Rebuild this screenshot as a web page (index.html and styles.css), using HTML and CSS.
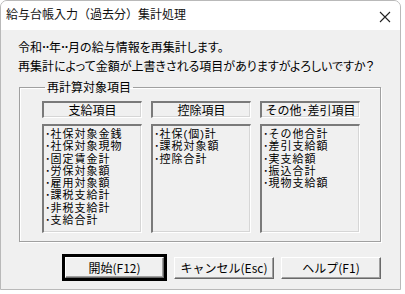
FILE: index.html
```html
<!DOCTYPE html>
<html lang="ja">
<head>
    <meta charset="UTF-8">
    <title>給与台帳入力（過去分）集計処理</title>
    <link rel="stylesheet" href="styles.css">
</head>
<body>

<div class="window">
    <div class="titlebar">
        <span class="title">給与台帳入力（過去分）集計処理</span>
        <svg class="close" width="12" height="12" viewBox="0 0 12 12">
            <path d="M1 1 L11 11 M11 1 L1 11" stroke="#222" stroke-width="1.1" fill="none"/>
        </svg>
    </div>

    <div class="content">
        <div class="message">
            <div>令和<span class="dots">･･</span>年<span class="dots">･･</span>月の給与情報を再集計します。</div>
            <div>再集計によって金額が上書きされる項目がありますがよろしいですか？</div>
        </div>

        <fieldset class="group">
            <legend>再計算対象項目</legend>
            <div class="columns">
                <div class="column">
                    <div class="col-head">支給項目</div>
                    <ul class="col-list">
                        <li>社保対象金銭</li>
                        <li>社保対象現物</li>
                        <li>固定賃金計</li>
                        <li>労保対象額</li>
                        <li>雇用対象額</li>
                        <li>課税支給計</li>
                        <li>非税支給計</li>
                        <li>支給合計</li>
                    </ul>
                </div>
                <div class="column">
                    <div class="col-head">控除項目</div>
                    <ul class="col-list">
                        <li>社保(個)計</li>
                        <li>課税対象額</li>
                        <li>控除合計</li>
                    </ul>
                </div>
                <div class="column">
                    <div class="col-head">その他･差引項目</div>
                    <ul class="col-list">
                        <li>その他合計</li>
                        <li>差引支給額</li>
                        <li>実支給額</li>
                        <li>振込合計</li>
                        <li>現物支給額</li>
                    </ul>
                </div>
            </div>
        </fieldset>

        <div class="buttons">
            <div class="default-frame"><button class="btn">開始(F12)</button></div>
            <button class="btn">キャンセル(Esc)</button>
            <button class="btn">ヘルプ(F1)</button>
        </div>
    </div>
</div>

</body>
</html>
```

FILE: styles.css
```css
/* Page and dialog window */
body {
    margin: 0;
    background-color: #ffffff;
    font-family: "Noto Sans CJK JP", "Noto Sans", sans-serif;
    font-size: 12px;
    color: #000;
}

.window {
    width: 401px;
    height: 290px;
    box-sizing: border-box;
    border: 1px solid #b9b9b9;
    border-radius: 7px 7px 0 0;
    background-color: #f0f0f0;
    overflow: hidden;
}

.titlebar {
    height: 29px;
    background-color: #ffffff;
    display: flex;
    align-items: center;
    justify-content: space-between;
    padding: 0 9px 0 5px;
}

.title {
    font-size: 12px;
    line-height: 14px;
    margin-top: -3px;
    color: #111;
}

.close {
    margin-top: 2px;
}

.content {
    padding: 7px 0 0 16px;
}

/* Message lines */
.message {
    line-height: 19px;
    font-feature-settings: "palt";
    padding-left: 1px;
}

.dots {
    letter-spacing: -2.5px;
    margin-left: -1px;
    margin-right: 1px;
}

/* Group box */
.group {
    width: 362px;
    height: 162px;
    box-sizing: border-box;
    margin: 5px 0 0 2px;
    padding: 7px 19px 8px 22px;
    border: 1px solid #a0a0a0;
    box-shadow: inset 1px 1px 0 #ffffff, 1px 1px 0 #ffffff;
}

.group legend {
    padding: 0 2px;
    margin-left: 3px;
    line-height: 14px;
}

.columns {
    display: flex;
    gap: 9px;
}

.column {
    width: 100px;
    display: flex;
    flex-direction: column;
    gap: 6px;
}

.col-head,
.col-list {
    box-sizing: border-box;
    border-top: 2px solid #7a7a7a;
    border-left: 2px solid #7a7a7a;
    border-right: 1px solid #ffffff;
    border-bottom: 1px solid #ffffff;
    box-shadow: inset -1px -1px 0 #d6d6d6;
}

.col-head {
    height: 17px;
    line-height: 14px;
    text-align: center;
}

.col-list {
    list-style: none;
    margin: 0;
    padding: 2px 0 0 1px;
    height: 109px;
    font-family: "Liberation Sans", "Noto Sans CJK JP", sans-serif;
    font-size: 11px;
    letter-spacing: 1px;
    line-height: 12.25px;
}

.col-list li::before {
    content: "･";
    letter-spacing: 0;
}

/* Buttons */
.buttons {
    display: flex;
    align-items: center;
    gap: 7px;
    margin: 12px 0 0 45px;
}

.default-frame {
    border: 3px solid #000;
    display: flex;
}

.btn {
    font-family: inherit;
    font-size: 12px;
    line-height: 14px;
    width: 100px;
    height: 22px;
    padding: 0;
    background-color: #f0f0f0;
    color: #000;
    border-top: 1px solid #ffffff;
    border-left: 1px solid #ffffff;
    border-right: 1px solid #696969;
    border-bottom: 1px solid #696969;
    box-shadow: inset -1px -1px 0 #a0a0a0;
}

.default-frame .btn {
    width: 99px;
    height: 21px;
}
```
